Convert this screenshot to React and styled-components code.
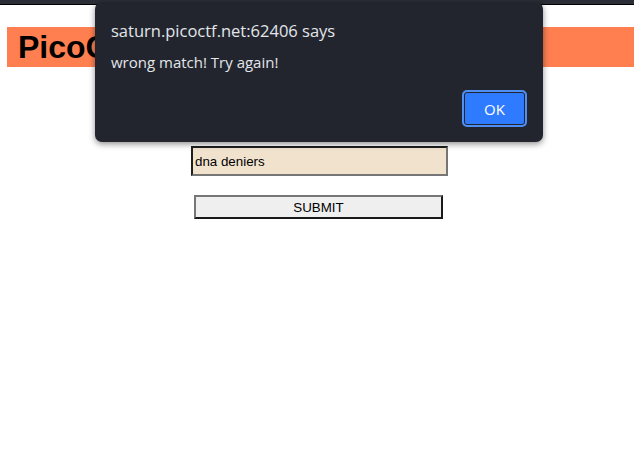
import React from 'react';
import styled, { createGlobalStyle } from 'styled-components';

const Global = createGlobalStyle`
  html, body {
    margin: 0;
    padding: 0;
    background: #ffffff;
  }
  body {
    font-family: "Liberation Sans", Arial, sans-serif;
  }
`;

const Page = styled.div`
  position: relative;
  width: 634px;
  height: 475px;
  overflow: hidden;
`;

const TopBar = styled.div`
  height: 4px;
  background: #2b2e36;
  border-bottom: 1px solid #000;
`;

const Content = styled.main`
  padding: 22px 0 0 7px;
`;

const Banner = styled.h1`
  margin: 0;
  height: 40px;
  padding-left: 11px;
  background: #ff7f50;
  color: #000;
  font-size: 32px;
  font-weight: 700;
  line-height: 40px;
  white-space: nowrap;
`;

const Form = styled.form`
  display: flex;
  flex-direction: column;
  align-items: center;
  gap: 19px;
  margin-top: 79px;
  padding-right: 2px;
`;

const TextInput = styled.input`
  box-sizing: border-box;
  width: 257px;
  height: 30px;
  padding: 0 2px;
  background: #f1e2ce;
  border: 2px solid;
  border-color: #1f1f1f #767676 #767676 #1f1f1f;
  font-family: "Liberation Sans", Arial, sans-serif;
  font-size: 13.33px;
  color: #000;
  outline: none;
`;

const SubmitButton = styled.button`
  box-sizing: border-box;
  width: 249px;
  height: 24px;
  margin-right: 2px;
  background: #efefef;
  border: 2px solid;
  border-color: #767676 #1a1a1a #1a1a1a #767676;
  font-family: "Liberation Sans", Arial, sans-serif;
  font-size: 13.33px;
  color: #000;
  padding: 0;
`;

const Dialog = styled.div`
  position: absolute;
  left: 95px;
  top: 2px;
  width: 448px;
  height: 140px;
  box-sizing: border-box;
  padding: 17px 16px 15px 16px;
  background: #22252e;
  border-radius: 7px;
  box-shadow: 0 2px 6px rgba(0, 0, 0, 0.45);
  font-family: "Open Sans", "Noto Sans", sans-serif;
  color: #e3e5ea;
  display: flex;
  flex-direction: column;
`;

const DialogTitle = styled.div`
  font-size: 16.5px;
  line-height: 24px;
`;

const DialogMessage = styled.div`
  margin-top: 8px;
  font-size: 15px;
  line-height: 22px;
`;

const Actions = styled.div`
  margin-top: auto;
  display: flex;
  justify-content: flex-end;
`;

const OkButton = styled.button`
  box-sizing: border-box;
  width: 65px;
  height: 37px;
  border-radius: 5px;
  border: 2px solid #4d8ff5;
  box-shadow: inset 0 0 0 1px #22252e;
  background: #2f7bff;
  color: #ffffff;
  font-family: "Open Sans", "Noto Sans", sans-serif;
  font-size: 15px;
  padding: 0;
`;

export default function App() {
  return (
    <Page>
      <Global />
      <TopBar />
      <Content>
        <Banner>PicoCTF</Banner>
        <Form onSubmit={(e) => e.preventDefault()}>
          <TextInput defaultValue="dna deniers" />
          <SubmitButton type="submit">SUBMIT</SubmitButton>
        </Form>
      </Content>
      <Dialog>
        <DialogTitle>saturn.picoctf.net:62406 says</DialogTitle>
        <DialogMessage>wrong match! Try again!</DialogMessage>
        <Actions>
          <OkButton>OK</OkButton>
        </Actions>
      </Dialog>
    </Page>
  );
}
